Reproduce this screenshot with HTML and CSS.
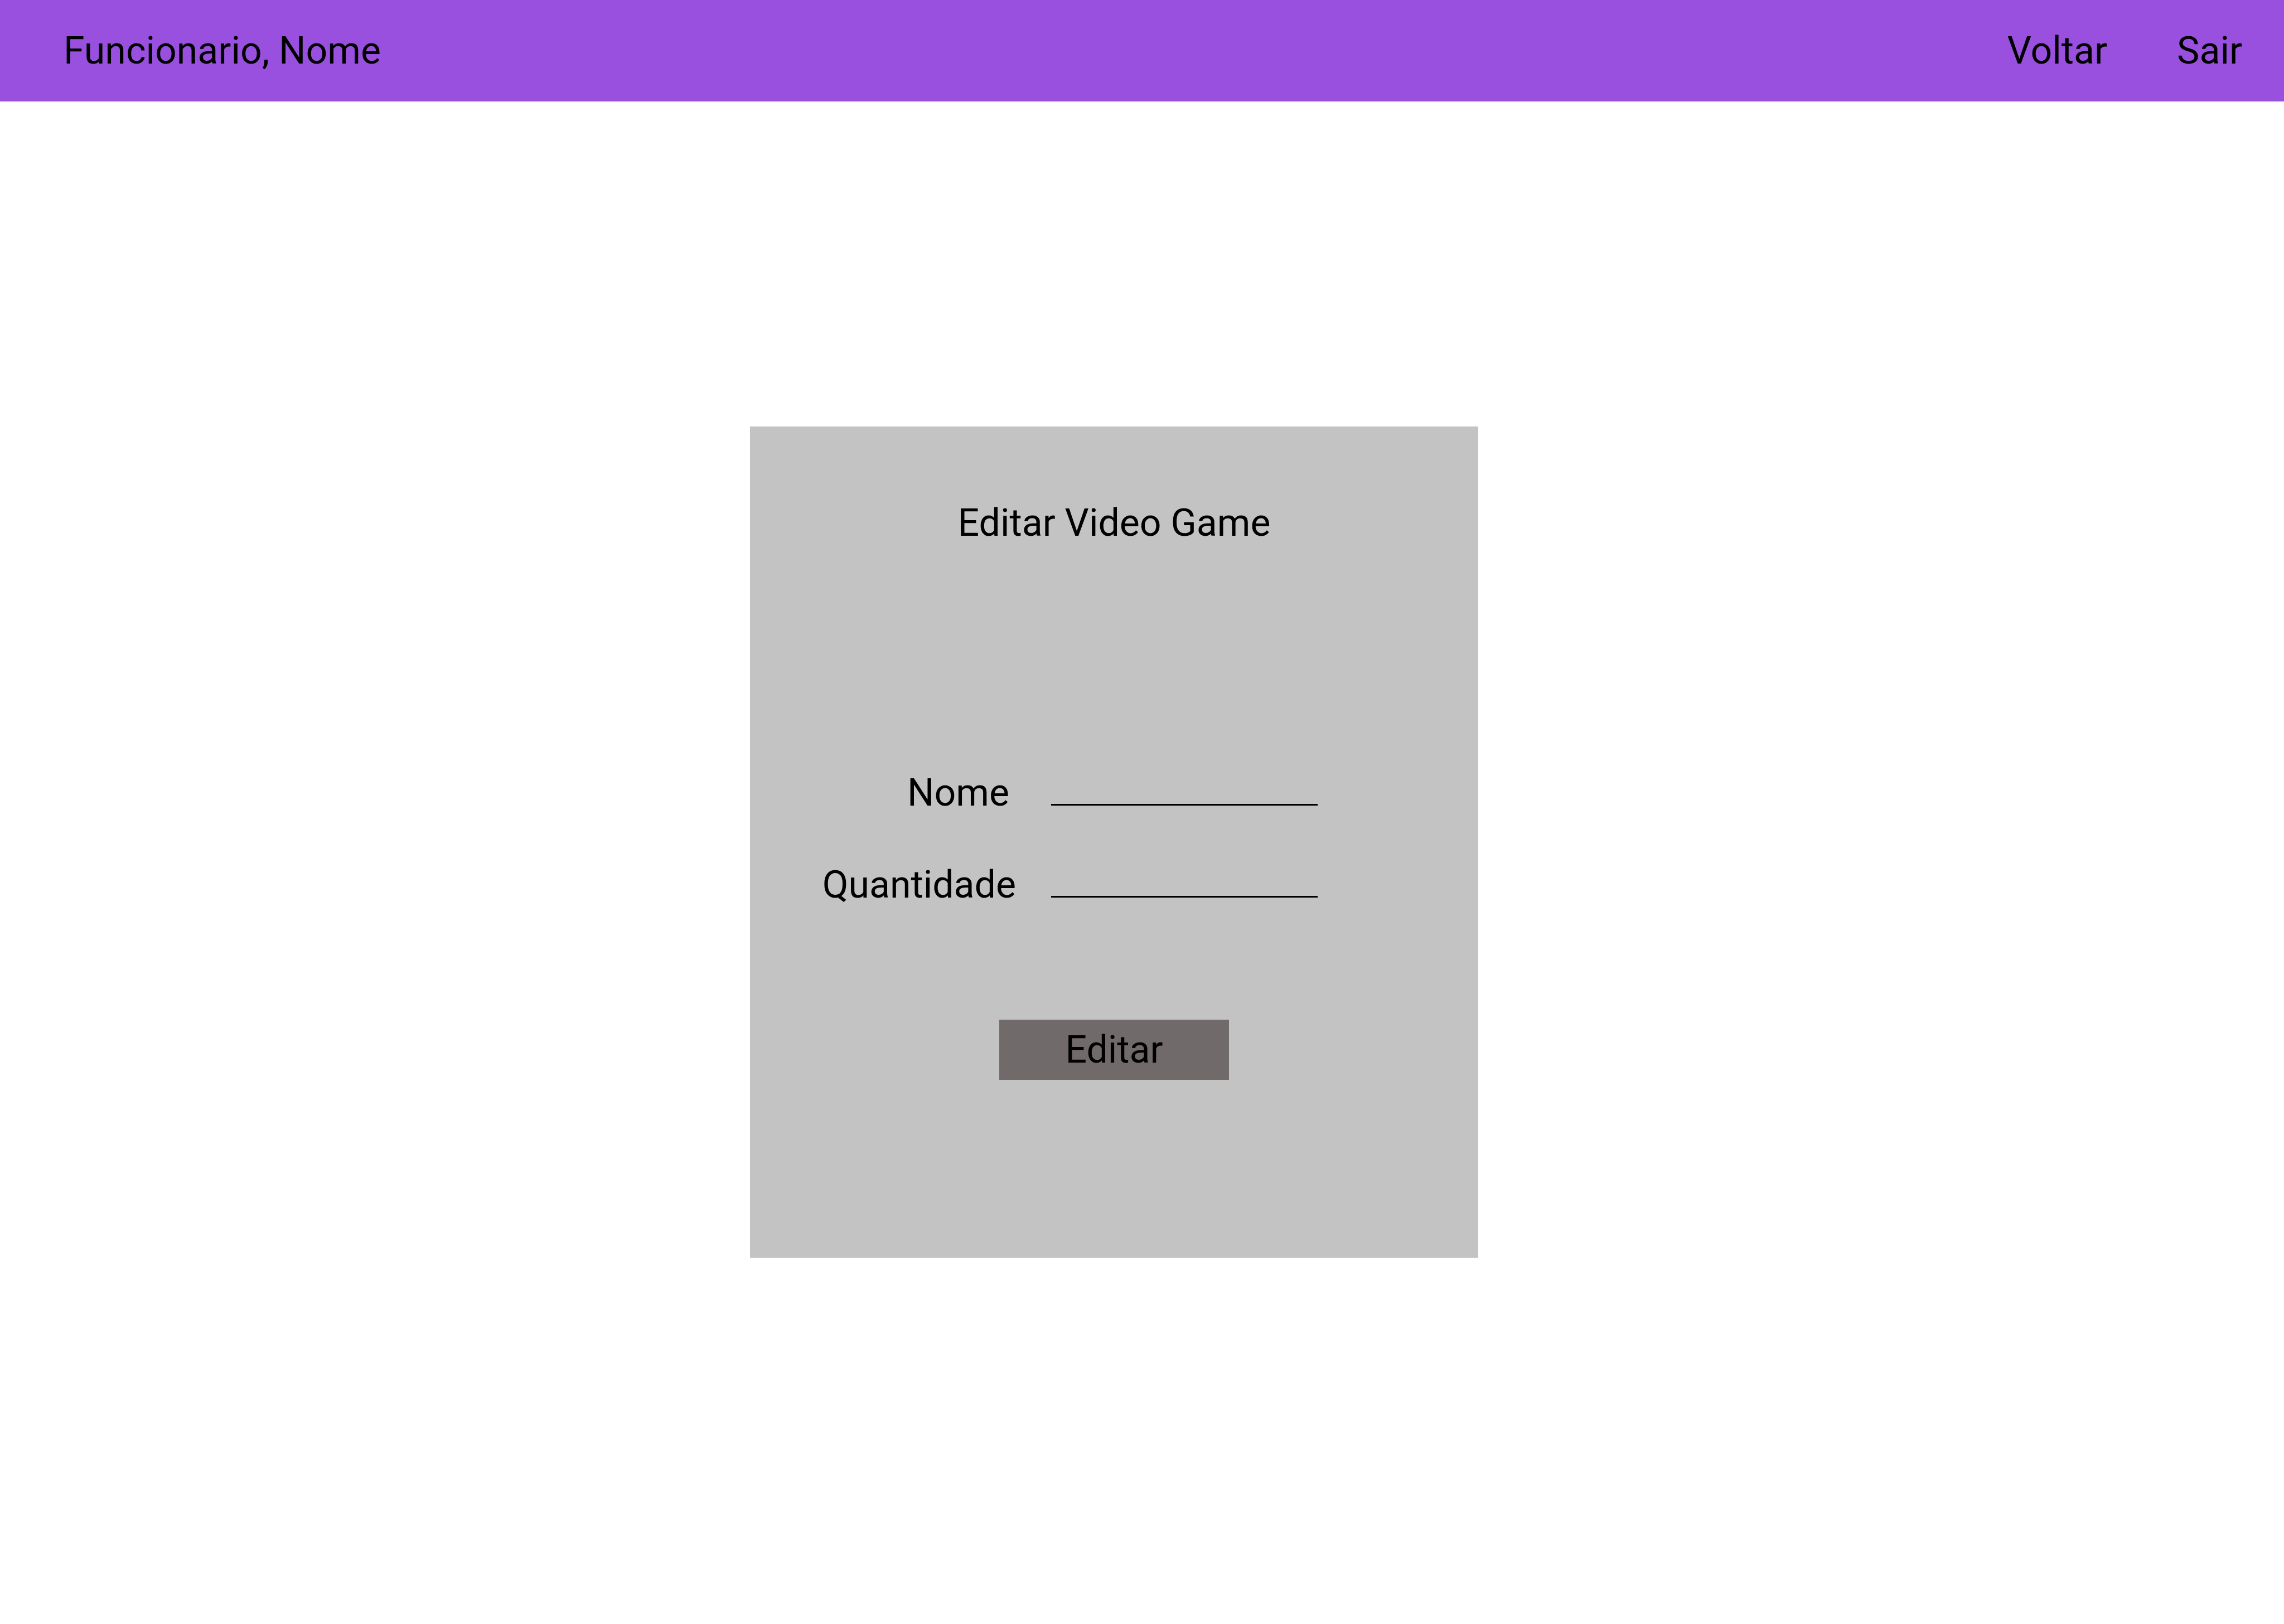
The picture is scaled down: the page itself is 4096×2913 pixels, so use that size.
FILE: index.html
```html
<!DOCTYPE html>
<html lang="pt-BR">
<head>
  <meta charset="utf-8">
  <meta name="viewport" content="width=device-width, initial-scale=1">
  <title>Editar Video Game</title>
  <link rel="stylesheet" href="styles.css">
</head>
<body>
  <header class="topbar">
    <span class="topbar-user">Funcionario, Nome</span>
    <nav class="topbar-nav">
      <a class="topbar-link" href="#voltar">Voltar</a>
      <a class="topbar-link" href="#sair">Sair</a>
    </nav>
  </header>
  <main class="page">
    <form class="card">
      <h1 class="card-title">Editar Video Game</h1>
      <div class="fields">
        <label class="field-label field-label-inset" for="nome">Nome</label>
        <input class="field-input" id="nome" name="nome" type="text">
        <label class="field-label" for="quantidade">Quantidade</label>
        <input class="field-input" id="quantidade" name="quantidade" type="text">
      </div>
      <button class="card-button" type="submit">Editar</button>
    </form>
  </main>
</body>
</html>
```

FILE: styles.css
```css
* {
  box-sizing: border-box;
}

body {
  margin: 0;
  background: #fff;
  color: #000;
  font-family: Roboto, "Liberation Sans", sans-serif;
  font-size: 68px;
  line-height: 80px;
}

.topbar {
  display: flex;
  justify-content: space-between;
  align-items: center;
  padding: 51px 75px 51px 114px;
  background: #9a50df;
}

.topbar-nav {
  display: flex;
  gap: 125px;
}

.topbar-link {
  color: inherit;
  text-decoration: none;
}

.page {
  display: flex;
  justify-content: center;
  padding: 583px 100px 0 0;
}

.card {
  display: flex;
  flex-direction: column;
  align-items: center;
  width: 100%;
  max-width: 1306px;
  padding: 133px 127px 319px;
  background: #c3c3c3;
}

.card-title {
  margin: 0 0 404px;
  font-size: 68px;
  font-weight: 400;
}

.fields {
  display: grid;
  grid-template-columns: 350px 478px;
  gap: 85px 63px;
  align-self: flex-start;
  margin-bottom: 202px;
}

.field-label {
  text-align: right;
}

.field-label-inset {
  padding-right: 12px;
}

.field-input {
  width: 100%;
  height: 63px;
  padding: 0;
  border: 0;
  border-bottom: 3px solid #000;
  border-radius: 0;
  background: transparent;
  color: inherit;
  font: inherit;
  line-height: 60px;
  outline: 0;
}

.card-button {
  width: 412px;
  padding: 14px;
  border: 0;
  background: #716a6a;
  color: inherit;
  font: inherit;
  cursor: pointer;
}
```
